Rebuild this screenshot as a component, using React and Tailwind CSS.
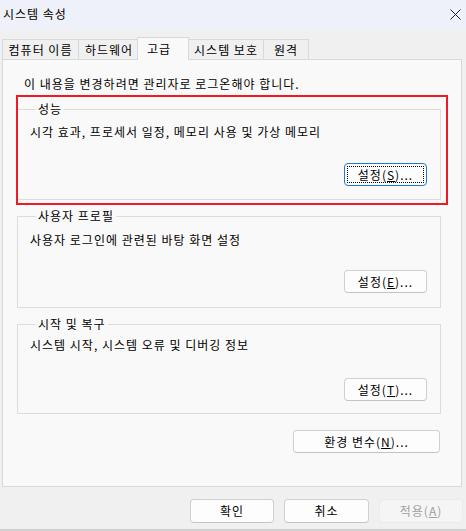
import React from 'react';

const font = { fontFamily: '"Noto Sans CJK KR", "Noto Sans", sans-serif' };

const Tab = ({ label, width, active, className = '' }) => (
  <div
    className={`flex justify-center border border-b-0 border-[#d9d9d9] ${
      active
        ? 'relative z-10 h-[23px] -mb-px bg-[#f9f9f9] justify-start pl-[9px] pt-[3px]'
        : 'h-[20px] bg-[#f0f0f0] items-center'
    } ${className}`}
    style={{ width }}
  >
    <span className="leading-[16px]">{label}</span>
  </div>
);

const WinButton = ({ children, focused, disabled, className = '' }) => (
  <button
    className={`relative flex items-center justify-center rounded-[4px] border leading-[16px] tracking-[1px] ${
      focused
        ? 'border-[#1e78d7] bg-[#fdfdfd]'
        : disabled
        ? 'border-[#ebebeb] bg-[#f5f5f5] text-[#a0a0a0]'
        : 'border-[#d0d0d0] border-b-[#c4c4c4] bg-[#fdfdfd]'
    } ${className}`}
  >
    {focused && <span className="absolute inset-[2px] border border-dotted border-black" />}
    <span>{children}</span>
  </button>
);

const GroupBox = ({ title, text, children, textTop, btnTop, pb, className = '' }) => (
  <fieldset className={`ml-[14px] w-[424px] border border-[#dcdcdc] pl-[12px] ${pb} ${className}`}>
    <legend className="ml-[6px] px-[2px] leading-[16px]">{title}</legend>
    <div className={`leading-[16px] ${textTop}`}>{text}</div>
    <div className={`flex justify-end pr-[13px] ${btnTop}`}>{children}</div>
  </fieldset>
);

export default function App() {
  return (
    <div
      className="relative w-[466px] h-[531px] overflow-hidden bg-[#f0f0f0] text-[12px] tracking-[1px] text-black"
      style={font}
    >
      {/* title bar */}
      <div className="flex h-[30px] items-center justify-between bg-[#eef1f9] pl-[3px] pr-[5px]">
        <span className="leading-[16px] -mt-[2px]">시스템 속성</span>
        <svg width="11" height="11" viewBox="0 0 11 11" className="-mt-[2px]">
          <path d="M0.5 0.5 L10.5 10.5 M10.5 0.5 L0.5 10.5" stroke="#1f1f1f" strokeWidth="1" />
        </svg>
      </div>

      {/* tabs */}
      <div className="mt-[7px] flex h-[22px] items-end pl-[2px]">
        <Tab label="컴퓨터 이름" width={77} />
        <Tab label="하드웨어" width={62} className="-ml-px" />
        <Tab label="고급" width={52} active className="-ml-[3px]" />
        <Tab label="시스템 보호" width={76} className="-ml-px" />
        <Tab label="원격" width={46} className="-ml-px" />
      </div>

      {/* tab panel */}
      <div className="mx-[2px] h-[428px] w-[460px] border border-[#d9d9d9] bg-[#f9f9f9] pt-[16px]">
        <div className="ml-[21px] leading-[16px]">이 내용을 변경하려면 관리자로 로그온해야 합니다.</div>

        <GroupBox
          className="mt-[9px]"
          title="성능"
          text="시각 효과, 프로세서 일정, 메모리 사용 및 가상 메모리"
          textTop="mt-[7px]"
          btnTop="mt-[23px]"
          pb="pb-[13px]"
        >
          <WinButton focused className="h-[23px] w-[83px]">
            설정(<u>S</u>)...
          </WinButton>
        </GroupBox>

        <GroupBox
          className="mt-[8px]"
          title="사용자 프로필"
          text="사용자 로그인에 관련된 바탕 화면 설정"
          textTop="mt-[8px]"
          btnTop="mt-[22px]"
          pb="pb-[14px]"
        >
          <WinButton className="h-[23px] w-[83px]">
            설정(<u>E</u>)...
          </WinButton>
        </GroupBox>

        <GroupBox
          className="mt-[8px]"
          title="시작 및 복구"
          text="시스템 시작, 시스템 오류 및 디버깅 정보"
          textTop="mt-[5px]"
          btnTop="mt-[25px]"
          pb="pb-[12px]"
        >
          <WinButton className="h-[23px] w-[83px]">
            설정(<u>T</u>)...
          </WinButton>
        </GroupBox>

        <div className="mt-[16px] flex justify-end pr-[21px]">
          <WinButton className="h-[23px] w-[147px]">
            환경 변수(<u>N</u>)...
          </WinButton>
        </div>
      </div>

      {/* dialog buttons */}
      <div className="mt-[12px] flex justify-end gap-[10px] pr-[3px]">
        <WinButton className="h-[24px] w-[84px]">확인</WinButton>
        <WinButton className="h-[24px] w-[85px]">취소</WinButton>
        <WinButton disabled className="h-[24px] w-[84px]">
          적용(<u>A</u>)
        </WinButton>
      </div>
      <div className="mt-[6px] h-[2px] bg-[#d0d0d0]" />

      {/* highlight annotation */}
      <div className="pointer-events-none absolute left-[16px] top-[95px] h-[110px] w-[432px] border-2 border-[#ed1c24]" />
    </div>
  );
}
